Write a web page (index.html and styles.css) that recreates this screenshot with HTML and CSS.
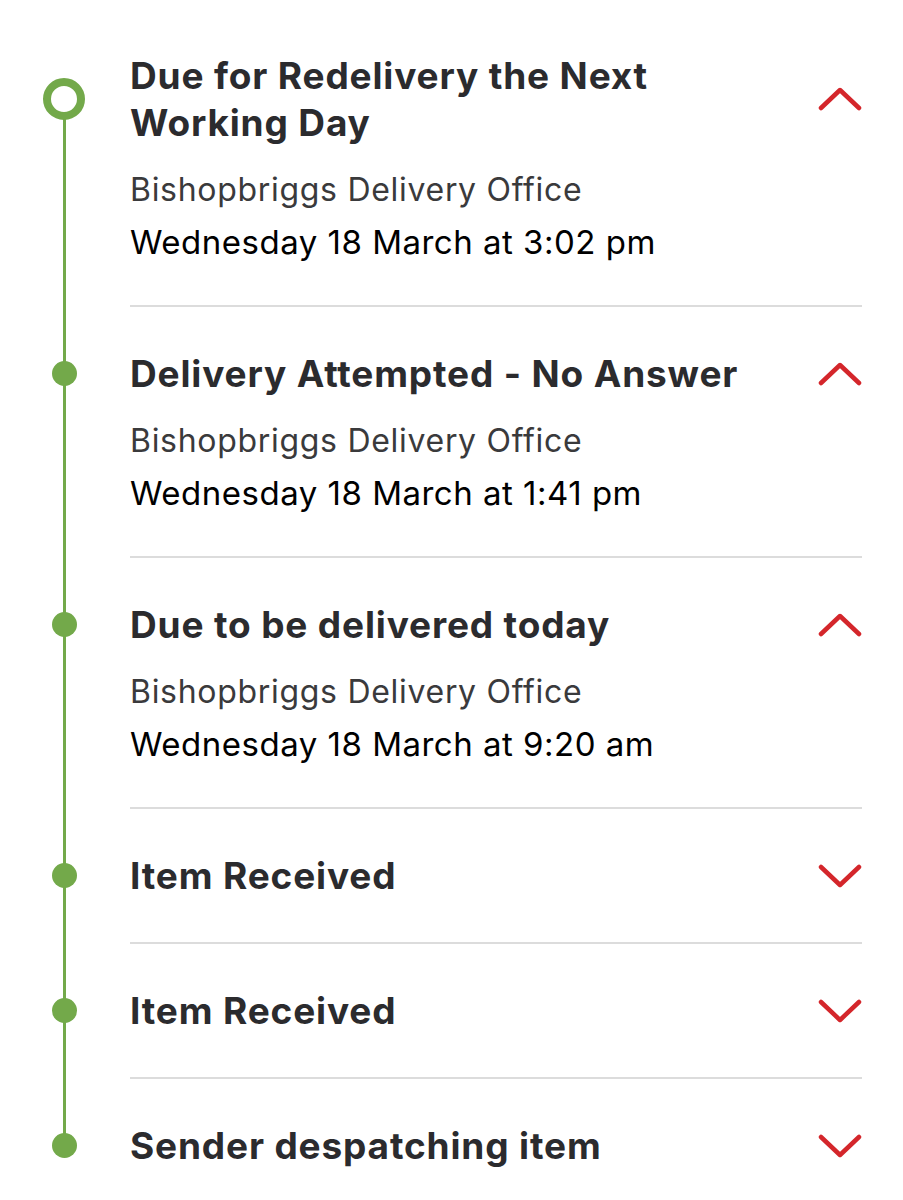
FILE: index.html
```html
<!DOCTYPE html>
<html lang="en">
<head>
<meta charset="UTF-8">
<meta name="viewport" content="width=device-width, initial-scale=1.0">
<title>Tracking History</title>
<link rel="stylesheet" href="styles.css">
</head>
<body>

<ol class="timeline">
  <li class="event open current">
    <div class="head">
      <span class="mark"><span class="node"></span></span>
      <h2 class="title">Due for Redelivery the Next Working Day</h2>
      <svg class="chevron" viewBox="0 0 44 24"><polyline points="3,21 22,3 41,21"/></svg>
    </div>
    <div class="details">
      <p class="office">Bishopbriggs Delivery Office</p>
      <p class="when">Wednesday 18 March at 3:02 pm</p>
    </div>
  </li>
  <li class="event open">
    <div class="head">
      <span class="mark"><span class="node"></span></span>
      <h2 class="title">Delivery Attempted - No Answer</h2>
      <svg class="chevron" viewBox="0 0 44 24"><polyline points="3,21 22,3 41,21"/></svg>
    </div>
    <div class="details">
      <p class="office">Bishopbriggs Delivery Office</p>
      <p class="when">Wednesday 18 March at 1:41 pm</p>
    </div>
  </li>
  <li class="event open">
    <div class="head">
      <span class="mark"><span class="node"></span></span>
      <h2 class="title">Due to be delivered today</h2>
      <svg class="chevron" viewBox="0 0 44 24"><polyline points="3,21 22,3 41,21"/></svg>
    </div>
    <div class="details">
      <p class="office">Bishopbriggs Delivery Office</p>
      <p class="when">Wednesday 18 March at 9:20 am</p>
    </div>
  </li>
  <li class="event">
    <div class="head">
      <span class="mark"><span class="node"></span></span>
      <h2 class="title">Item Received</h2>
      <svg class="chevron" viewBox="0 0 44 24"><polyline points="3,3 22,21 41,3"/></svg>
    </div>
  </li>
  <li class="event">
    <div class="head">
      <span class="mark"><span class="node"></span></span>
      <h2 class="title">Item Received</h2>
      <svg class="chevron" viewBox="0 0 44 24"><polyline points="3,3 22,21 41,3"/></svg>
    </div>
  </li>
  <li class="event">
    <div class="head">
      <span class="mark"><span class="node"></span></span>
      <h2 class="title">Sender despatching item</h2>
      <svg class="chevron" viewBox="0 0 44 24"><polyline points="3,3 22,21 41,3"/></svg>
    </div>
  </li>
</ol>

</body>
</html>
```

FILE: styles.css
```css
body {
  margin: 0;
  background: #fff;
  font-family: Inter, "Liberation Sans", sans-serif;
}
.timeline {
  list-style: none;
  margin: 0;
  padding: 9px 41px 0 0;
  position: relative;
}
/* the green rail behind the nodes */
.timeline::before {
  content: "";
  position: absolute;
  left: 62.5px;
  width: 3px;
  top: 98px;
  bottom: 66px;
  background: #73a94a;
}
.event {
  padding-top: 43px;
}
.event::after {
  content: "";
  display: block;
  height: 2px;
  margin: 43px 0 0 130px;
  background: #dcdcdc;
}
.event.open::after {
  margin-top: 37px;
}
.head {
  display: flex;
  align-items: center;
}
.mark {
  width: 128px;
  flex: none;
  display: flex;
  justify-content: center;
  position: relative;
  z-index: 1;
}
.node {
  width: 25px;
  height: 25px;
  border-radius: 50%;
  background: #73a94a;
}
.current .node {
  width: 42px;
  height: 42px;
  box-sizing: border-box;
  border: 8px solid #73a94a;
  background: #fff;
}
.title {
  flex: 1;
  margin: 0 0 0 2px;
  font-size: 37px;
  line-height: 47px;
  font-weight: 700;
  letter-spacing: 0.85px;
  color: #2b2b2e;
}
.chevron {
  width: 44px;
  height: 24px;
  flex: none;
  margin-left: 20px;
  fill: none;
  stroke: #d4262b;
  stroke-width: 4.5;
  stroke-linecap: round;
  stroke-linejoin: round;
}
.details {
  margin: 18px 0 0 130px;
}
.details p {
  margin: 0;
  line-height: 52px;
}
.office {
  font-size: 32px;
  letter-spacing: 0.7px;
  color: #3a3a3c;
}
.when {
  font-size: 33px;
  letter-spacing: 0.5px;
  color: #000;
}
```
